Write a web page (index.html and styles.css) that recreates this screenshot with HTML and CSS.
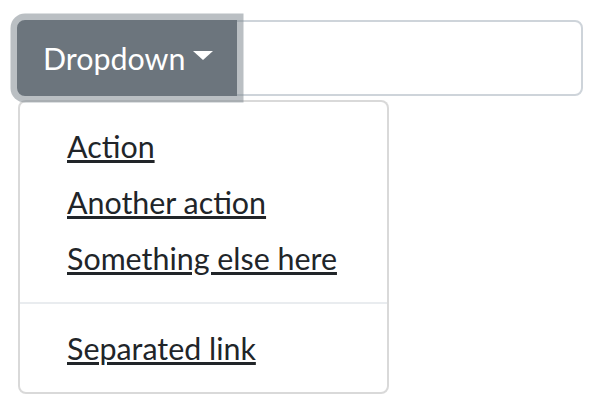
FILE: index.html
```html
<!DOCTYPE html>
<html lang="en">
<head>
<meta charset="utf-8">
<title>Dropdown</title>
<link rel="stylesheet" href="styles.css">
</head>
<body>
<div class="page">
  <div class="input-group">
    <button class="btn" type="button">Dropdown<span class="caret"></span></button>
    <input class="field" type="text" aria-label="Text input with dropdown button">
  </div>
  <div class="menu">
    <a class="item" href="#">Action</a>
    <a class="item" href="#">Another action</a>
    <a class="item" href="#">Something else here</a>
    <div class="divider"></div>
    <a class="item" href="#">Separated link</a>
  </div>
</div>
</body>
</html>
```
FILE: styles.css
```css
html, body {
  margin: 0;
  background: #fff;
}
body {
  font-family: Lato, "Noto Sans", sans-serif;
  font-size: 30.4px;
  color: #212529;
}
.page {
  display: flex;
  flex-direction: column;
  align-items: flex-start;
  padding: 20px 11px 0 17px;
}
.input-group {
  display: flex;
  align-items: stretch;
  align-self: stretch;
}
.btn {
  position: relative;
  z-index: 2;
  box-sizing: border-box;
  width: 220px;
  height: 76px;
  margin: 0;
  padding: 12px 24px;
  border: 2px solid #6c757d;
  border-radius: 8px 0 0 8px;
  background: #6c757d;
  color: #fff;
  font-family: inherit;
  font-size: 30.4px;
  line-height: 48px;
  text-align: left;
  white-space: nowrap;
  box-shadow: 0 0 0 6.5px rgba(130, 138, 145, 0.55);
  cursor: pointer;
}
.caret {
  display: inline-block;
  width: 0;
  height: 0;
  margin-left: 8px;
  vertical-align: 10px;
  border-top: 9px solid #fff;
  border-left: 10px solid transparent;
  border-right: 10px solid transparent;
}
.field {
  box-sizing: border-box;
  flex: 1;
  min-width: 0;
  height: 76px;
  margin: 0 0 0 -2px;
  padding: 12px 24px;
  border: 2px solid #ced4da;
  border-radius: 0 8px 8px 0;
  background: #fff;
  font-family: inherit;
  font-size: 30.4px;
  outline: none;
}
.menu {
  box-sizing: border-box;
  width: 371px;
  margin: 4px 0 0 1px;
  padding: 16px 0;
  border: 2px solid rgba(0, 0, 0, 0.15);
  border-radius: 8px;
  background: #fff;
}
.item {
  display: block;
  padding: 8px 47px;
  line-height: 40px;
  color: #212529;
  white-space: nowrap;
  text-decoration: underline;
  text-decoration-thickness: 3px;
  text-underline-offset: 2px;
}
.divider {
  height: 0;
  margin: 16px 0;
  border-top: 2px solid #e9ecef;
}
```
